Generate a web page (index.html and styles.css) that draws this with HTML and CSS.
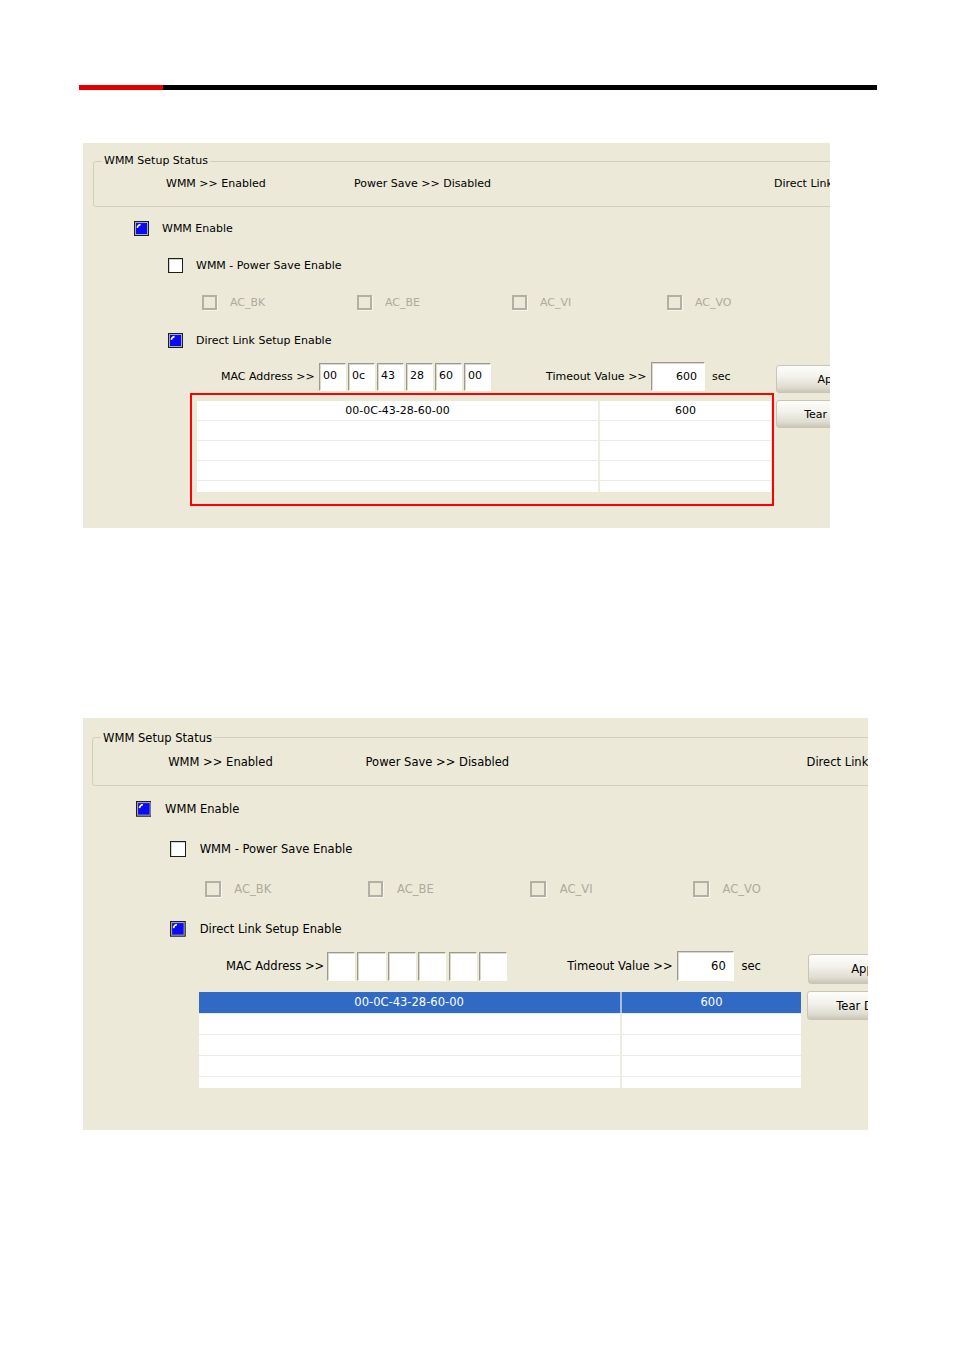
FILE: index.html
```html
<!DOCTYPE html>
<html lang="en">
<head>
  <meta charset="UTF-8">
  <title>WMM Setup</title>
  <link rel="stylesheet" href="styles.css">
</head>
<body>
  <div class="page">
    <div class="rule"><span class="rule-red"></span></div>

    <!-- first shot: entry added, red mark round the list -->
    <div class="panel">
      <fieldset class="status">
        <legend>WMM Setup Status</legend>
        <div class="status-row">
          <span class="st st-wmm">WMM &gt;&gt; Enabled</span>
          <span class="st st-ps">Power Save &gt;&gt; Disabled</span>
          <span class="st">Direct Link &gt;&gt; Enabled</span>
        </div>
      </fieldset>
      <div class="opt in1 first">
        <svg class="cb" width="15" height="15" viewBox="0 0 15 15"><rect x="0.5" y="0.5" width="14" height="14" fill="#a9a9a9" stroke="#1e1e1e"/><rect x="2" y="2" width="11" height="11" fill="#0a0af5"/><path d="M3.3 6.8 Q3.6 4 6.6 3.4" stroke="#fff" stroke-width="1.5" fill="none"/></svg>
        <span>WMM Enable</span>
      </div>
      <div class="opt in2"><span class="cb box"></span><span>WMM - Power Save Enable</span></div>
      <div class="opt in3">
        <span class="ac"><span class="cb off"></span>AC_BK</span>
        <span class="ac"><span class="cb off"></span>AC_BE</span>
        <span class="ac"><span class="cb off"></span>AC_VI</span>
        <span class="ac"><span class="cb off"></span>AC_VO</span>
      </div>
      <div class="opt in2 dls">
        <svg class="cb" width="15" height="15" viewBox="0 0 15 15"><rect x="0.5" y="0.5" width="14" height="14" fill="#a9a9a9" stroke="#1e1e1e"/><rect x="2" y="2" width="11" height="11" fill="#0a0af5"/><path d="M3.3 6.8 Q3.6 4 6.6 3.4" stroke="#fff" stroke-width="1.5" fill="none"/></svg>
        <span>Direct Link Setup Enable</span>
      </div>
      <div class="mac-row">
        <div class="mac-main">
          <span class="mac-label">MAC Address &gt;&gt;</span>
          <div class="octets">
            <span class="octet">00</span><span class="octet">0c</span><span class="octet">43</span>
            <span class="octet">28</span><span class="octet">60</span><span class="octet">00</span>
          </div>
          <span class="to-label">Timeout Value &gt;&gt;</span>
          <span class="to-box">600</span>
          <span class="sec">sec</span>
        </div>
        <button class="btn">Apply</button>
      </div>
      <div class="list-row">
        <div class="mark">
          <div class="list">
            <div class="lrow"><span class="c1">00-0C-43-28-60-00</span><span class="c2">600</span></div>
            <div class="lrow"><span class="c1"></span><span class="c2"></span></div>
            <div class="lrow"><span class="c1"></span><span class="c2"></span></div>
            <div class="lrow"><span class="c1"></span><span class="c2"></span></div>
            <div class="lrow"><span class="c1"></span><span class="c2"></span></div>
          </div>
        </div>
        <button class="btn">Tear Down</button>
      </div>
    </div>

    <!-- second shot: entry selected, fields cleared -->
    <div class="panel panel-b">
      <fieldset class="status">
        <legend>WMM Setup Status</legend>
        <div class="status-row">
          <span class="st st-wmm">WMM &gt;&gt; Enabled</span>
          <span class="st st-ps">Power Save &gt;&gt; Disabled</span>
          <span class="st">Direct Link &gt;&gt; Enabled</span>
        </div>
      </fieldset>
      <div class="opt in1 first">
        <svg class="cb" width="15" height="15" viewBox="0 0 15 15"><rect x="0.5" y="0.5" width="14" height="14" fill="#a9a9a9" stroke="#1e1e1e"/><rect x="2" y="2" width="11" height="11" fill="#0a0af5"/><path d="M3.3 6.8 Q3.6 4 6.6 3.4" stroke="#fff" stroke-width="1.5" fill="none"/></svg>
        <span>WMM Enable</span>
      </div>
      <div class="opt in2"><span class="cb box"></span><span>WMM - Power Save Enable</span></div>
      <div class="opt in3">
        <span class="ac"><span class="cb off"></span>AC_BK</span>
        <span class="ac"><span class="cb off"></span>AC_BE</span>
        <span class="ac"><span class="cb off"></span>AC_VI</span>
        <span class="ac"><span class="cb off"></span>AC_VO</span>
      </div>
      <div class="opt in2 dls">
        <svg class="cb" width="15" height="15" viewBox="0 0 15 15"><rect x="0.5" y="0.5" width="14" height="14" fill="#a9a9a9" stroke="#1e1e1e"/><rect x="2" y="2" width="11" height="11" fill="#0a0af5"/><path d="M3.3 6.8 Q3.6 4 6.6 3.4" stroke="#fff" stroke-width="1.5" fill="none"/></svg>
        <span>Direct Link Setup Enable</span>
      </div>
      <div class="mac-row">
        <div class="mac-main">
          <span class="mac-label">MAC Address &gt;&gt;</span>
          <div class="octets">
            <span class="octet"></span><span class="octet"></span><span class="octet"></span>
            <span class="octet"></span><span class="octet"></span><span class="octet"></span>
          </div>
          <span class="to-label">Timeout Value &gt;&gt;</span>
          <span class="to-box">60</span>
          <span class="sec">sec</span>
        </div>
        <button class="btn">Apply</button>
      </div>
      <div class="list-row">
        <div class="mark">
          <div class="list">
            <div class="lrow sel"><span class="c1">00-0C-43-28-60-00</span><span class="c2">600</span></div>
            <div class="lrow"><span class="c1"></span><span class="c2"></span></div>
            <div class="lrow"><span class="c1"></span><span class="c2"></span></div>
            <div class="lrow"><span class="c1"></span><span class="c2"></span></div>
            <div class="lrow"><span class="c1"></span><span class="c2"></span></div>
          </div>
        </div>
        <button class="btn">Tear Down</button>
      </div>
    </div>
  </div>
</body>
</html>
```

FILE: styles.css
```css
*{margin:0;padding:0;box-sizing:border-box;}
html, body{background:#fff;}
body{font-family:"DejaVu Sans",Tahoma,sans-serif;font-size:11px;color:#000;}

.page{padding:85px 0 0 79px;}
.rule{width:798px;height:5px;background:#000;}
.rule-red{display:block;width:84px;height:5px;background:#e50000;}

.panel{width:747px;height:385px;margin:53px 0 0 4px;padding-top:11px;background:#ece9d8;overflow:hidden;}
.panel-b{zoom:1.05;height:392px;margin-top:181px;padding-top:12px;}

/* group box */
.status{margin-left:10px;width:800px;min-width:0;border:1px solid #d0d0bf;border-radius:3px;padding:9px 0 15px 8px;}
.panel-b .status{margin-left:8px;}
.status legend{padding:0 2px;line-height:14px;}
.status-row{display:flex;padding-left:64px;line-height:14px;white-space:nowrap;}
.st{flex:none;}
.st-wmm{width:188px;}
.st-ps{width:420px;}

/* check rows */
.opt{display:flex;align-items:center;height:37px;white-space:nowrap;}
.opt.first{margin-top:3px;}
.opt.dls{height:39px;}
.panel-b .opt{height:38px;}
.in1{padding-left:51px;}
.in2{padding-left:85px;}
.in3{padding-left:119px;}
.panel-b .in1{padding-left:50px;}
.panel-b .in2{padding-left:83px;}
.panel-b .in3{padding-left:116px;}
.cb{flex:none;display:block;width:15px;height:15px;margin-right:13px;}
.cb.box{border:1px solid #1e1e1e;background:#fff;box-shadow:inset 1px 1px 0 #d4d4d4;}
.cb.off{border:2px solid #b3b0a3;box-shadow:1px 1px 0 #f7f6f1;}
.ac{flex:none;width:155px;display:flex;align-items:center;color:#aeab9e;}

/* mac / timeout */
.mac-row{display:flex;height:33px;}
.mac-main{flex:none;width:693px;display:flex;align-items:center;padding-left:138px;white-space:nowrap;}
.panel-b .mac-main{width:690px;padding-left:136px;}
.mac-label{flex:none;width:98px;}
.panel-b .mac-label{width:96px;}
.octets{display:flex;gap:2px;}
.octet{width:27px;height:28px;padding:5px 0 0 3px;background:#fff;border:1px solid #fff;border-top-color:#9c9a8f;border-left-color:#9c9a8f;box-shadow:inset 1px 1px 0 #dcd9cc;}
.to-label{flex:none;width:105px;margin-left:55px;}
.panel-b .to-label{margin-left:57px;}
.to-box{width:54px;height:29px;padding-right:7px;text-align:right;line-height:27px;background:#fff;border:1px solid #fff;border-top-color:#9c9a8f;border-left-color:#9c9a8f;box-shadow:inset 1px 1px 0 #dcd9cc;}
.sec{margin-left:7px;}

.btn{flex:none;width:114px;height:28px;font:inherit;color:#000;text-align:center;border:1px solid #c9c5b6;border-radius:3px;
  background:linear-gradient(#fdfdfb 0%,#f3f2ec 40%,#e0ddd2 80%,#cbc6b6 100%);}
.mac-row .btn{align-self:flex-end;}

/* list */
.list-row{display:flex;}
.mark{flex:none;width:584px;margin-left:107px;padding:6px 1px 12px 5px;border:2px solid #f00;}
.panel-b .mark{margin-left:103px;border-color:transparent;}
.list-row .btn{margin:7px 0 0 2px;}
.list{background:#eeebe0;}
.lrow{display:flex;height:19px;margin-bottom:1px;line-height:19px;}
.lrow:last-child{height:11px;margin-bottom:0;}
.c1{flex:none;width:401px;background:#fff;text-align:center;}
.c2{flex:1;margin-left:2px;background:#fff;text-align:center;}
.lrow.sel{height:20px;line-height:20px;margin-bottom:1px;}
.lrow.sel .c1, .lrow.sel .c2{background:#316ac5;color:#fff;}
.lrow.sel .c2{margin-left:0;border-left:2px solid #a9bde3;}
```
